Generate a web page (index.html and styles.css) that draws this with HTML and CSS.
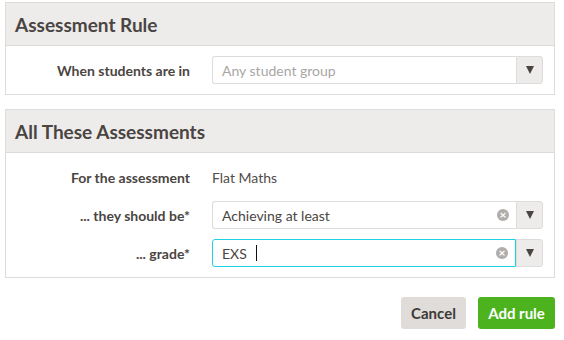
FILE: index.html
```html
<!DOCTYPE html>
<html lang="en">
<head>
    <meta charset="UTF-8">
    <title>Assessment Rule</title>
    <link rel="stylesheet" href="styles.css">
</head>
<body>
    <div class="panel">
        <div class="panel-heading"><h2>Assessment Rule</h2></div>
        <div class="panel-body">
            <div class="form-row">
                <label>When students are in</label>
                <div class="select">
                    <div class="select-input"><span class="placeholder">Any student group</span></div>
                    <div class="select-arrow"><span class="caret"></span></div>
                </div>
            </div>
        </div>
    </div>

    <div class="panel">
        <div class="panel-heading"><h2>All These Assessments</h2></div>
        <div class="panel-body">
            <div class="form-row">
                <label>For the assessment</label>
                <div class="static">Flat Maths</div>
            </div>
            <div class="form-row">
                <label>... they should be*</label>
                <div class="select">
                    <div class="select-input">
                        <span class="value">Achieving at least</span>
                        <span class="clear">&times;</span>
                    </div>
                    <div class="select-arrow"><span class="caret"></span></div>
                </div>
            </div>
            <div class="form-row">
                <label>... grade*</label>
                <div class="select">
                    <div class="select-input focused">
                        <span class="value">EXS</span><span class="cursor"></span>
                        <span class="clear">&times;</span>
                    </div>
                    <div class="select-arrow"><span class="caret"></span></div>
                </div>
            </div>
        </div>
    </div>

    <div class="actions">
        <button class="btn btn-cancel">Cancel</button>
        <button class="btn btn-add">Add rule</button>
    </div>
</body>
</html>
```

FILE: styles.css
```css
body {
    margin: 2px 9px 0 5px;
    font-family: Lato, "Open Sans", sans-serif;
    color: #4a4542;
    background: white;
}
.panel {
    border: 1px solid #dedcda;
    margin-bottom: 14px;
}
.panel-heading {
    background-color: #eeecea;
    border-bottom: 1px solid #dedcda;
    height: 42px;
    padding-left: 9px;
    display: flex;
    align-items: center;
}
.panel-heading h2 {
    margin: 0;
    font-size: 19px;
    font-weight: bold;
    color: #4a4542;
}
.panel-body {
    padding: 10px 11px 10px 0;
    display: flex;
    flex-direction: column;
    gap: 10px;
}
.form-row {
    display: flex;
    align-items: center;
    height: 28px;
}
.form-row label {
    width: 184px;
    text-align: right;
    font-weight: bold;
    font-size: 14px;
    margin-right: 22px;
}
.static {
    font-size: 14px;
    color: #524d4a;
}
.select {
    flex: 1;
    display: flex;
    height: 28px;
}
.select-input {
    flex: 1;
    display: flex;
    align-items: center;
    border: 1px solid #dedcda;
    border-right: none;
    border-radius: 3px 0 0 3px;
    padding-left: 9px;
    font-size: 14px;
}
.select-input.focused {
    border: 1px solid #1fd3e6;
}
.placeholder {
    color: #aaa6a3;
}
.value {
    color: #4a4542;
}
.cursor {
    display: inline-block;
    width: 1px;
    height: 16px;
    background: #111;
    margin-left: 9px;
}
.clear {
    margin-left: auto;
    margin-right: 7px;
    width: 12px;
    height: 12px;
    border-radius: 50%;
    background: #b0adab;
    color: white;
    font-size: 12px;
    font-weight: bold;
    line-height: 11px;
    text-align: center;
}
.select-arrow {
    width: 25px;
    background: #eeecea;
    border: 1px solid #dedcda;
    border-radius: 0 3px 3px 0;
    display: flex;
    align-items: center;
    justify-content: center;
}
.caret {
    width: 0;
    height: 0;
    border-left: 4.5px solid transparent;
    border-right: 4.5px solid transparent;
    border-top: 8px solid #4a4542;
}
.actions {
    display: flex;
    justify-content: flex-end;
    gap: 12px;
    margin-top: 19px;
}
.btn {
    height: 32px;
    border: none;
    border-radius: 3px;
    font-family: Lato, "Open Sans", sans-serif;
    font-size: 15px;
    font-weight: bold;
    padding: 0 10px;
}
.btn-cancel {
    background-color: #e0dcda;
    color: #3e3a38;
    width: 65px;
}
.btn-add {
    background-color: #4cb31e;
    color: white;
    width: 77px;
}
```
